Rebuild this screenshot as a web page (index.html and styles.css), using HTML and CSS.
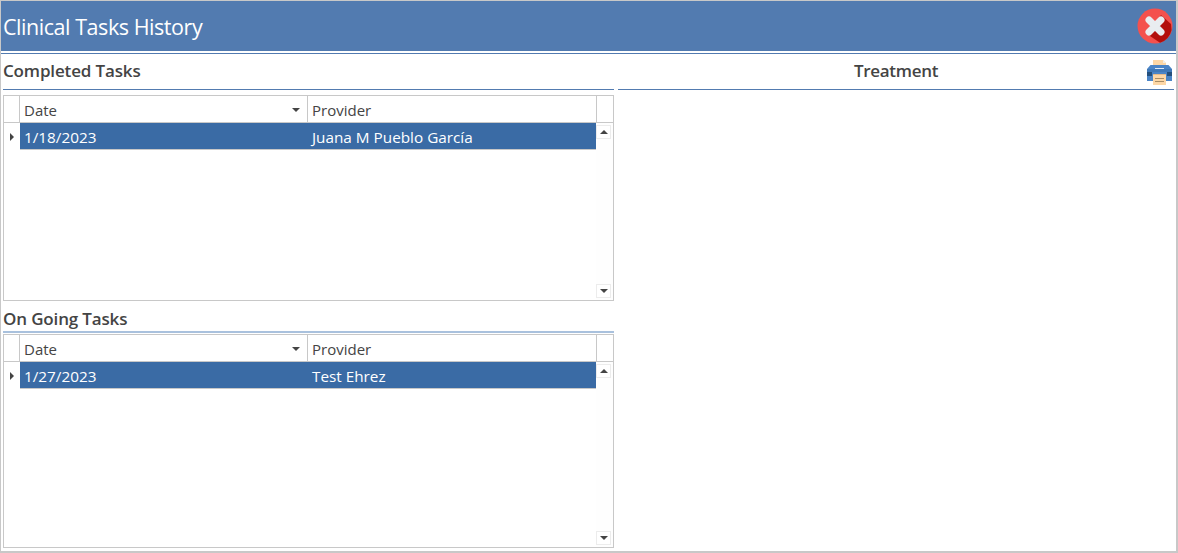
FILE: index.html
```html
<!DOCTYPE html>
<html lang="en">
<head>
<meta charset="utf-8">
<title>Clinical Tasks History</title>
<link rel="stylesheet" href="styles.css">
</head>
<body>
<div class="window">
  <header class="titlebar">
    <h1 class="title">Clinical Tasks History</h1>
    <svg class="close-icon" viewBox="0 0 36 36" width="36" height="36" aria-label="Close">
      <circle cx="18" cy="18" r="17.5" fill="#f4514d"/>
      <path d="M24 7 L34 16 L34.6 22 A17.5 17.5 0 0 1 23 34.8 L10 26 Z" fill="#b30f0c"/>
      <path d="M12 12 L24 24 M24 12 L12 24" fill="none" stroke="#e9edf0" stroke-width="7" stroke-linecap="round"/>
    </svg>
  </header>
  <main class="content">
    <section class="left">
      <h2 class="section-title first">Completed Tasks</h2>
      <div class="data-grid top-grid">
        <div class="grid-head">
          <div class="cell-indicator"></div>
          <div class="col col-date">Date<span class="sort-arrow"></span></div>
          <div class="col col-provider">Provider</div>
          <div class="col-corner"></div>
        </div>
        <div class="grid-body">
          <div class="rows">
            <div class="row">
              <div class="row-indicator"><span class="row-arrow"></span></div>
              <div class="row-date">1/18/2023</div>
              <div class="row-provider">Juana M Pueblo García</div>
            </div>
          </div>
          <div class="scrollbar">
            <div class="scroll-btn"><span class="arrow-up"></span></div>
            <div class="scroll-btn"><span class="arrow-down"></span></div>
          </div>
        </div>
      </div>
      <h2 class="section-title second">On Going Tasks</h2>
      <div class="data-grid bottom-grid">
        <div class="grid-head">
          <div class="cell-indicator"></div>
          <div class="col col-date">Date<span class="sort-arrow"></span></div>
          <div class="col col-provider">Provider</div>
          <div class="col-corner"></div>
        </div>
        <div class="grid-body">
          <div class="rows">
            <div class="row">
              <div class="row-indicator"><span class="row-arrow"></span></div>
              <div class="row-date">1/27/2023</div>
              <div class="row-provider">Test Ehrez</div>
            </div>
          </div>
          <div class="scrollbar">
            <div class="scroll-btn"><span class="arrow-up"></span></div>
            <div class="scroll-btn"><span class="arrow-down"></span></div>
          </div>
        </div>
      </div>
    </section>
    <section class="right">
      <div class="treatment-head">
        <h2 class="treatment-title">Treatment</h2>
        <svg class="print-icon" viewBox="0 0 25 25" width="25" height="25" aria-label="Print">
          <path d="M6 0 H16 L19 3 V9 H6 Z" fill="#fdd7a6"/>
          <path d="M16 0 L19 3 H16 Z" fill="#f3efe6"/>
          <path d="M3.5 5 H21.5 L25 9 V21 H0 V9 Z" fill="#4a84c6"/>
          <path d="M0 9 H25 V12 H0 Z" fill="#3f78b8"/>
          <path d="M0 12 H5 V16 H0 Z M20 12 H25 V16 H20 Z" fill="#234f7d"/>
          <rect x="8" y="8" width="9" height="1" fill="#dfeaf6"/>
          <rect x="6" y="14" width="13" height="11" fill="#fdd7a6"/>
          <rect x="6" y="14" width="13" height="1" fill="#e3b988"/>
          <rect x="8" y="18" width="9" height="1" fill="#a88c64"/>
          <rect x="8" y="21" width="9" height="1" fill="#a88c64"/>
        </svg>
      </div>
    </section>
  </main>
</div>
</body>
</html>
```
FILE: styles.css
```css
* { box-sizing: border-box; }
html, body { margin: 0; padding: 0; background: #fff; }
body { width: 1178px; height: 553px; overflow: hidden; font-family: "Open Sans", "Noto Sans", sans-serif; color: #444; }
.window { width: 1178px; height: 553px; display: flex; flex-direction: column; border: 1px solid #c8c8c8; border-bottom-width: 2px; border-right-width: 2px; background: #fff; }
.titlebar { height: 50px; flex: none; background: #527bb0; display: flex; align-items: center; justify-content: space-between; padding: 0 3px 0 2px; }
.title { margin: 0; font-size: 21.5px; font-weight: 400; color: #fff; letter-spacing: -0.45px; }
.close-icon { display: block; }
.content { flex: 1; display: flex; margin-top: 2px; border-top: 1px solid #527bb0; padding: 0 1px 0 2px; min-height: 0; }
.left { width: 611px; flex: none; display: flex; flex-direction: column; }
.right { flex: 1; margin-left: 4px; }
.section-title { margin: 0; font-size: 17px; font-weight: 600; color: #444; letter-spacing: -0.15px; line-height: 22px; }
.section-title.first { height: 36px; padding-top: 6px; border-bottom: 1px solid #527bb0; margin-bottom: 5px; }
.section-title.second { height: 32px; padding-top: 7px; border-bottom: 2px solid #a9c1dd; margin-bottom: 1px; }
.data-grid { border: 1px solid #c8c8c8; display: flex; flex-direction: column; background: #fff; width: 611px; }
.top-grid { height: 206px; flex: none; }
.bottom-grid { height: 214px; flex: none; }
.grid-head { height: 27px; flex: none; display: flex; border-bottom: 1px solid #c8c8c8; font-size: 15px; color: #444; }
.cell-indicator { width: 16px; flex: none; border-right: 1px solid #c8c8c8; }
.col { padding-left: 4px; line-height: 28px; position: relative; border-right: 1px solid #c8c8c8; flex: none; }
.col-date { width: 288px; }
.col-provider { width: 289px; }
.col-corner { flex: 1; }
.sort-arrow { position: absolute; right: 7px; top: 12px; width: 0; height: 0; border-left: 4px solid transparent; border-right: 4px solid transparent; border-top: 4px solid #444; }
.grid-body { flex: 1; display: flex; min-height: 0; }
.rows { width: 592px; flex: none; }
.row { height: 27px; display: flex; font-size: 15.3px; line-height: 28px; color: #fff; }
.row-indicator { width: 16px; flex: none; background: #fff; display: flex; align-items: center; justify-content: center; border-right: 1px solid #fff; }
.row-arrow { width: 0; height: 0; border-top: 4px solid transparent; border-bottom: 4px solid transparent; border-left: 4px solid #444; }
.row-date { width: 288px; flex: none; padding-left: 4px; background: #3a6ba5; border-bottom: 1px solid #c8c8c8; }
.row-provider { flex: 1; padding-left: 4px; background: #3a6ba5; border-bottom: 1px solid #c8c8c8; }
.scrollbar { flex: 1; display: flex; flex-direction: column; justify-content: space-between; align-items: flex-start; padding: 2px 0; background: #fefefe; }
.scroll-btn { width: 15px; height: 14px; border: 1px solid #ececec; background: #fff; display: flex; align-items: center; justify-content: center; }
.arrow-up { width: 0; height: 0; border-left: 4px solid transparent; border-right: 4px solid transparent; border-bottom: 4px solid #444; }
.arrow-down { width: 0; height: 0; border-left: 4px solid transparent; border-right: 4px solid transparent; border-top: 4px solid #444; }
.treatment-head { height: 36px; display: flex; align-items: center; justify-content: center; padding-bottom: 2px; position: relative; border-bottom: 1px solid #527bb0; width: 556px; }
.treatment-title { margin: 0; font-size: 17px; font-weight: 600; color: #444; letter-spacing: -0.3px; }
.print-icon { position: absolute; right: 2px; top: 6px; }
```
